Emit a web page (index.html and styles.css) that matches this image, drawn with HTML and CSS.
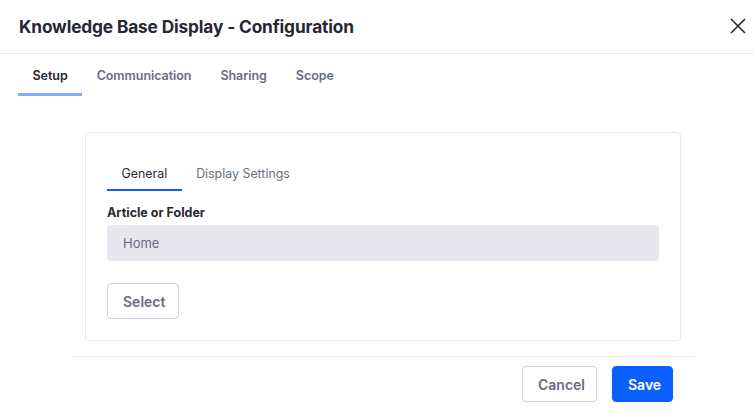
FILE: index.html
```html
<!DOCTYPE html>
<html>
<head>
<meta charset="utf-8">
<link rel="stylesheet" href="styles.css">
</head>
<body>
<div class="modal">
  <header class="modal-header">
    <h1 class="modal-title">Knowledge Base Display - Configuration</h1>
    <button class="close" aria-label="Close">
      <svg width="16" height="16" viewBox="0 0 16 16"><path d="M1 1 L15 15 M15 1 L1 15" stroke="#272833" stroke-width="1.6" fill="none"/></svg>
    </button>
  </header>
  <nav class="nav-tabs">
    <a class="nav-link active">Setup</a>
    <a class="nav-link">Communication</a>
    <a class="nav-link">Sharing</a>
    <a class="nav-link">Scope</a>
  </nav>
  <main class="body">
    <section class="card">
      <div class="inner-tabs">
        <a class="inner-link active">General</a>
        <a class="inner-link">Display Settings</a>
      </div>
      <label class="label">Article or Folder</label>
      <div class="input">Home</div>
      <button class="btn btn-secondary btn-select">Select</button>
    </section>
    <footer class="footer">
      <button class="btn btn-secondary">Cancel</button>
      <button class="btn btn-primary">Save</button>
    </footer>
  </main>
</div>
</body>
</html>
```

FILE: styles.css
```css
* { box-sizing: border-box; }
html, body {
  margin: 0;
  padding: 0;
  background: #fff;
  font-family: Inter, "Noto Sans", "Liberation Sans", sans-serif;
  color: #272833;
}
.modal { width: 755px; height: 415px; }
.modal-header {
  height: 54px;
  border-bottom: 1px solid #e7e7ed;
  display: flex;
  align-items: center;
  justify-content: space-between;
  padding: 0 9px 1px 19px;
}
.modal-title {
  margin: 0;
  font-size: 17.3px;
  font-weight: 700;
  letter-spacing: -0.15px;
  color: #272833;
}
.close {
  border: 0;
  background: none;
  padding: 0;
  width: 16px;
  height: 16px;
  display: flex;
}
.nav-tabs {
  display: flex;
  padding-left: 18px;
  height: 42px;
}
.nav-link {
  display: block;
  padding: 1px 14.5px 0;
  height: 42px;
  line-height: 41px;
  font-size: 12.5px;
  font-weight: 600;
  letter-spacing: -0.05px;
  color: #6b6c7e;
}
.nav-link.active {
  color: #272833;
  box-shadow: inset 0 -3px 0 #80acff;
}
.body {
  margin-left: 72px;
  width: 623px;
  padding-top: 36px;
}
.card {
  margin-left: 13px;
  width: 596px;
  border: 1px solid #e7e7ed;
  border-radius: 4px;
  padding: 22px 21px 21px;
  display: flex;
  flex-direction: column;
  align-items: flex-start;
}
.inner-tabs {
  display: flex;
  height: 36px;
}
.inner-link {
  display: block;
  padding: 1px 14.5px 0;
  height: 36px;
  line-height: 35px;
  font-size: 12.4px;
  color: #6b6c7e;
}
.inner-link.active {
  color: #272833;
  box-shadow: inset 0 -2px 0 #0b5fff;
}
.label {
  margin-top: 13px;
  font-size: 12.5px;
  font-weight: 700;
  line-height: 18px;
  color: #272833;
}
.input {
  margin-top: 3px;
  width: 100%;
  height: 36px;
  line-height: 36px;
  background: #e7e7ed;
  border-radius: 4px;
  padding-left: 16px;
  font-size: 13px;
  color: #6b6c7e;
}
.btn {
  height: 36px;
  border-radius: 4px;
  font-family: inherit;
  font-size: 14px;
  font-weight: 600;
  padding: 0 15px;
  cursor: pointer;
}
.btn-secondary {
  background: #fff;
  border: 1px solid #cdced9;
  color: #6b6c7e;
}
.btn-primary {
  background: #0b5fff;
  border: 1px solid #0b5fff;
  color: #fff;
}
.btn-select { margin-top: 22px; width: 72px; }
.footer {
  margin-top: 15px;
  border-top: 1px solid #e7e7ed;
  padding: 9px 22px 0 0;
  display: flex;
  justify-content: flex-end;
  gap: 15px;
}
.footer .btn-secondary { width: 75px; }
.footer .btn-primary { width: 61px; }
```
